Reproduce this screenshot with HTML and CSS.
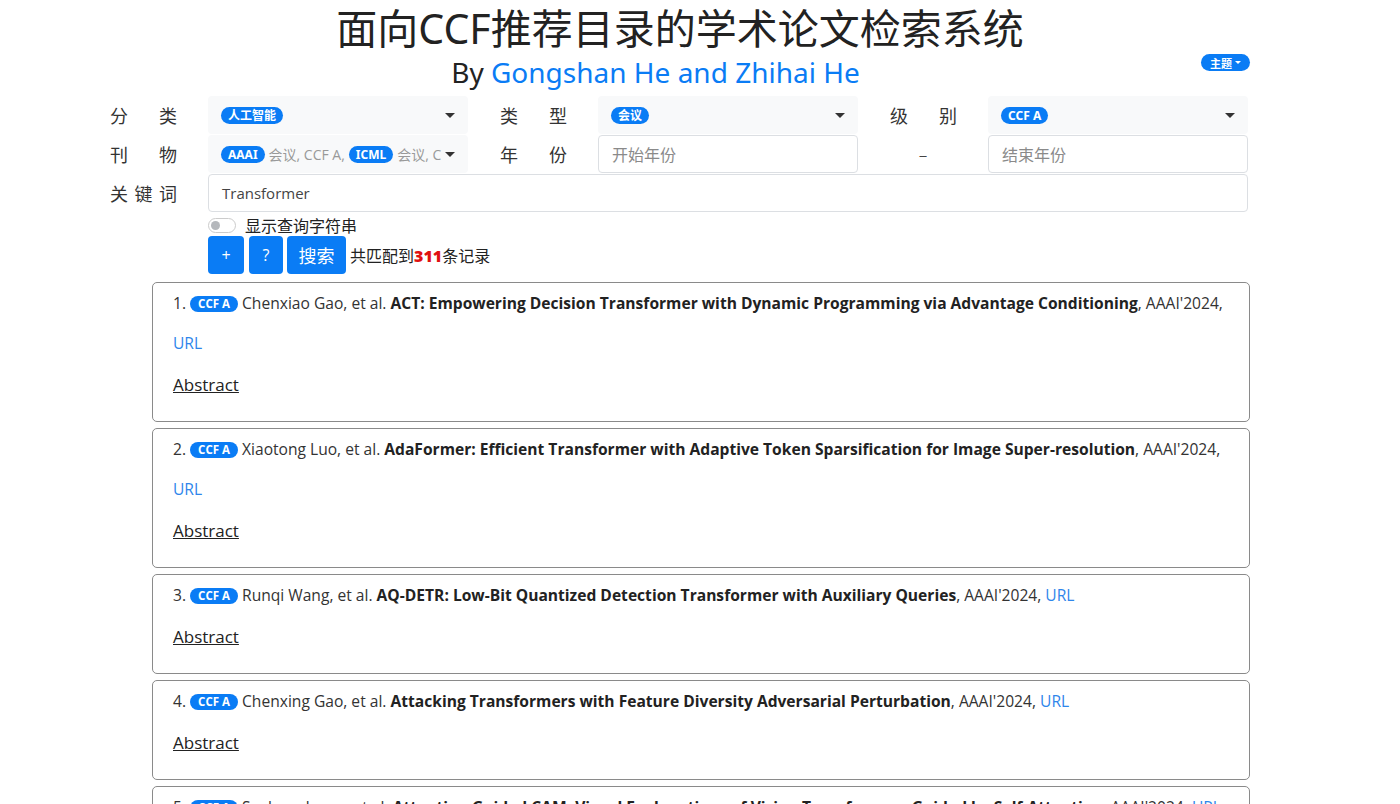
FILE: index.html
```html
<!DOCTYPE html>
<html lang="zh">
<head>
<meta charset="utf-8">
<title>面向CCF推荐目录的学术论文检索系统</title>
<link rel="stylesheet" href="styles.css">
</head>
<body>
<div class="container">
  <h1 class="title">面向CCF推荐目录的学术论文检索系统</h1>
  <div class="subrow">
    <h2 class="subtitle">By <span class="blue">Gongshan He and Zhihai He</span></h2>
    <span class="theme">主题<span class="caret-sm"></span></span>
  </div>

  <div class="filters">
    <div class="label first"><span class="lbl">分类</span></div>
    <div class="select"><span class="chip">人工智能</span><span class="caret"></span></div>
    <div class="label"><span class="lbl">类型</span></div>
    <div class="select"><span class="chip">会议</span><span class="caret"></span></div>
    <div class="label"><span class="lbl">级别</span></div>
    <div class="select"><span class="chip">CCF A</span><span class="caret"></span></div>

    <div class="label first"><span class="lbl">刊物</span></div>
    <div class="select multi"><span class="chips"><span class="chip">AAAI</span><span class="muted">会议, CCF A,</span><span class="chip">ICML</span><span class="muted">会议, C</span></span><span class="caret"></span></div>
    <div class="label"><span class="lbl">年份</span></div>
    <div class="input placeholder">开始年份</div>
    <div class="label dash">–</div>
    <div class="input placeholder">结束年份</div>

    <div class="label first"><span class="lbl">关键词</span></div>
    <div class="input keyword">Transformer</div>
  </div>

  <div class="controls">
    <div class="toggle-row"><span class="switch"><span class="knob"></span></span><span class="toggle-text">显示查询字符串</span></div>
    <div class="btn-row">
      <span class="btn narrow">+</span>
      <span class="btn narrow2">?</span>
      <span class="btn wide">搜索</span>
      <span class="count">共匹配到<b>311</b>条记录</span>
    </div>
  </div>

  <div class="results">
    <div class="card">
      <p class="line">1. <span class="badge">CCF A</span> Chenxiao Gao, et al. <b>ACT: Empowering Decision Transformer with Dynamic Programming via Advantage Conditioning</b>, AAAI'2024, <a class="url">URL</a></p>
      <p class="abstract">Abstract</p>
    </div>
    <div class="card">
      <p class="line">2. <span class="badge">CCF A</span> Xiaotong Luo, et al. <b>AdaFormer: Efficient Transformer with Adaptive Token Sparsification for Image Super-resolution</b>, AAAI'2024, <a class="url">URL</a></p>
      <p class="abstract">Abstract</p>
    </div>
    <div class="card">
      <p class="line">3. <span class="badge">CCF A</span> Runqi Wang, et al. <b>AQ-DETR: Low-Bit Quantized Detection Transformer with Auxiliary Queries</b>, AAAI'2024, <a class="url">URL</a></p>
      <p class="abstract">Abstract</p>
    </div>
    <div class="card">
      <p class="line">4. <span class="badge">CCF A</span> Chenxing Gao, et al. <b>Attacking Transformers with Feature Diversity Adversarial Perturbation</b>, AAAI'2024, <a class="url">URL</a></p>
      <p class="abstract">Abstract</p>
    </div>
    <div class="card">
      <p class="line">5. <span class="badge">CCF A</span> Saebom Leem, et al. <b>Attention Guided CAM: Visual Explanations of Vision Transformers Guided by Self-Attention</b>, AAAI'2024, <a class="url">URL</a></p>
      <p class="abstract">Abstract</p>
    </div>
  </div>
</div>
</body>
</html>
```

FILE: styles.css
```css
* { box-sizing: border-box; }
html, body { margin: 0; padding: 0; background: #fff; }
body {
  font-family: "Open Sans", "Noto Sans", "Noto Sans CJK SC", sans-serif;
  color: #212529;
  overflow: hidden;
}
.container {
  width: 1140px;
  margin-left: 110px;
}
.title {
  margin: 0;
  text-align: center;
  font-family: "Noto Sans", "Noto Sans CJK SC", sans-serif;
  font-weight: 400;
  font-size: 41px;
  line-height: 56px;
  color: #222;
}
.subrow {
  display: flex;
  align-items: flex-start;
  height: 40px;
}
.subtitle {
  flex: 1;
  margin: 0;
  text-align: center;
  font-family: "Noto Sans", "Noto Sans CJK SC", sans-serif;
  font-weight: 400;
  font-size: 28px;
  line-height: 32px;
  color: #222;
}
.blue { color: #0a7cf5; }
.theme {
  margin-top: -2px;
  width: 49px;
  height: 17px;
  border-radius: 9px;
  background: #0a7cf5;
  color: #fff;
  font-size: 11px;
  font-weight: 700;
  display: flex;
  align-items: center;
  justify-content: center;
  gap: 3px;
  font-family: "Noto Sans CJK SC", sans-serif;
}
.caret-sm {
  width: 0; height: 0;
  border-left: 3px solid transparent;
  border-right: 3px solid transparent;
  border-top: 3px solid #fff;
}
.filters {
  display: grid;
  grid-template-columns: 98px 260px 130px 260px 130px 260px;
  grid-template-rows: 38px 38px 38px;
  row-gap: 1px;
}
.label {
  display: flex;
  align-items: center;
  padding-left: 32px;
  font-family: "Noto Sans CJK SC", sans-serif;
  font-size: 18px;
  color: #333;
}
.label.first { padding-left: 0; }
.lbl {
  display: block;
  width: 67px;
  text-align: justify;
  text-align-last: justify;
}
.label.dash {
  justify-content: center;
  padding-left: 0;
  font-size: 16px;
  color: #444;
}
.select {
  background: #f8f9fa;
  border-radius: 4px;
  display: flex;
  align-items: center;
  padding: 0 13px;
  position: relative;
}
.chip {
  display: inline-block;
  background: #0a7cf5;
  color: #fff;
  border-radius: 9px;
  font-size: 12px;
  font-weight: 700;
  line-height: 17px;
  padding: 0 7px;
  font-family: "Noto Sans", "Noto Sans CJK SC", sans-serif;
}
.caret {
  position: absolute;
  right: 13px;
  top: 17px;
  width: 0; height: 0;
  border-left: 5px solid transparent;
  border-right: 5px solid transparent;
  border-top: 5px solid #333;
}
.multi { overflow: hidden; }
.chips {
  white-space: nowrap;
  width: 230px;
  display: flex;
  align-items: center;
  gap: 4px;
}
.muted {
  color: #999;
  font-size: 14px;
  font-family: "Open Sans", "Noto Sans CJK SC", sans-serif;
}
.input {
  border: 1px solid #dcdfe3;
  border-radius: 4px;
  background: #fff;
  display: flex;
  align-items: center;
  padding: 0 13px;
  font-size: 15px;
  color: #444;
}
.placeholder {
  color: #8a8a8a;
  font-family: "Noto Sans CJK SC", sans-serif;
  font-size: 16px;
}
.keyword {
  grid-column: 2 / -1;
}
.controls {
  margin-left: 98px;
  padding-top: 4px;
}
.toggle-row {
  display: flex;
  align-items: center;
  height: 18px;
}
.switch {
  width: 28px;
  height: 15px;
  border: 1px solid #ccc;
  border-radius: 8px;
  background: #fff;
  position: relative;
  margin-right: 9px;
}
.knob {
  position: absolute;
  left: 2px;
  top: 2px;
  width: 9px;
  height: 9px;
  border-radius: 50%;
  background: #b5b8bc;
}
.toggle-text {
  font-family: "Noto Sans CJK SC", sans-serif;
  font-size: 16px;
  color: #222;
}
.btn-row {
  display: flex;
  align-items: center;
  margin-top: 2px;
  height: 38px;
}
.btn {
  height: 38px;
  background: #0a7cf5;
  color: #fff;
  border-radius: 4px;
  display: flex;
  align-items: center;
  justify-content: center;
  font-size: 16px;
  margin-right: 5px;
}
.narrow { width: 36px; }
.narrow2 { width: 34px; margin-right: 4px; }
.wide {
  width: 59px;
  font-size: 18px;
  font-family: "Noto Sans CJK SC", sans-serif;
  margin-right: 4px;
}
.count {
  font-family: "Noto Sans CJK SC", sans-serif;
  font-size: 16px;
  color: #222;
}
.count b { color: #e01010; font-family: "Open Sans", sans-serif; font-weight: 800; }
.results {
  margin-left: 42px;
  margin-top: 8px;
}
.card {
  border: 1px solid #8a8a8a;
  border-radius: 5px;
  padding: 0 20px 16px;
  margin-bottom: 6px;
  line-height: 40px;
}
.card p { margin: 0; }
.line {
  font-size: 15.6px;
  color: #333;
}
.line b { color: #222; font-weight: 700; }
.badge {
  display: inline-block;
  background: #0a7cf5;
  color: #fff;
  border-radius: 9px;
  font-size: 11.5px;
  font-weight: 700;
  line-height: 16px;
  padding: 0 8px;
  vertical-align: 1px;
}
.url { color: #2f86eb; }
.card .abstract {
  margin-top: 2px;
  font-size: 17px;
  color: #222;
  text-decoration: underline;
}
```
